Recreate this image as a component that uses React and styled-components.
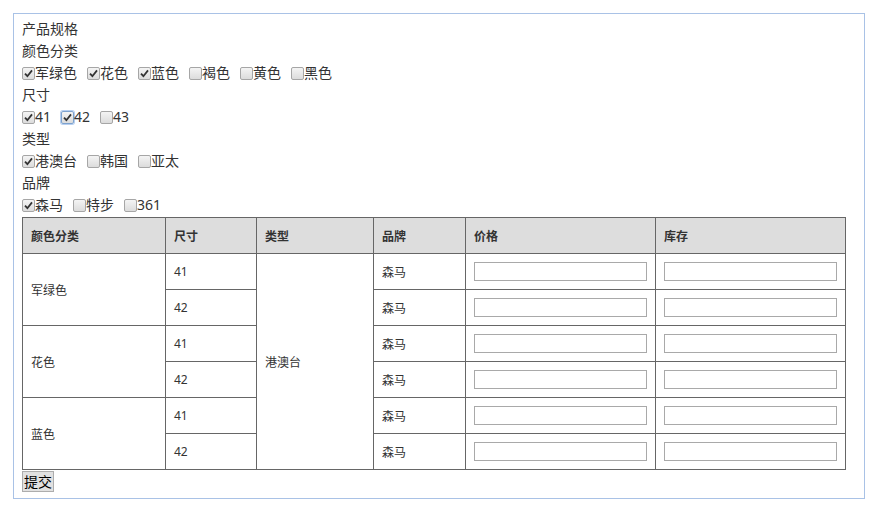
import React from "react";
import styled, { createGlobalStyle } from "styled-components";

const Global = createGlobalStyle`
  html, body { margin: 0; padding: 0; background: #fff; }
  body {
    font-family: "Noto Sans", "Noto Sans CJK SC", sans-serif;
    color: #333;
    font-size: 14px;
  }
`;

const Page = styled.div`
  padding: 13px 0 0 13px;
`;

const Panel = styled.form`
  width: 834px;
  border: 1px solid #a9c2e6;
  padding: 5px 8px 5px 8px;
`;

const Line = styled.div`
  height: 22px;
  line-height: 19px;
  font-size: 14px;
  color: #333;
  white-space: nowrap;
`;

const OptionRow = styled.div`
  height: 22px;
  display: flex;
  align-items: flex-start;
  gap: 10px;
  font-size: 14px;
  color: #333;
`;

const Option = styled.label`
  display: flex;
  align-items: center;
  cursor: pointer;
  height: 20px;
  line-height: 20px;
`;

const Box = styled.span`
  width: 11px;
  height: 11px;
  border: 1px solid ${(p) => (p.$focus ? "#7da2ce" : "#a6a6a6")};
  border-radius: 2px;
  background: linear-gradient(#f4f4f4, #dcdcdc);
  box-shadow: ${(p) => (p.$focus ? "0 0 0 1px #b7cff0" : "none")};
  display: flex;
  align-items: center;
  justify-content: center;
`;

const Table = styled.table`
  width: 824px;
  border-collapse: collapse;
  font-size: 12px;
  color: #333;
`;

const Th = styled.th`
  height: 36px;
  background: #dddddd;
  border: 1px solid #666;
  text-align: left;
  font-weight: bold;
  padding: 0 8px;
  width: ${(p) => p.$w}px;
  box-sizing: border-box;
`;

const Td = styled.td`
  height: 36px;
  box-sizing: border-box;
  border: 1px solid #666;
  padding: 0 8px;
  vertical-align: middle;
`;

const Input = styled.input`
  display: block;
  width: 173px;
  height: 19px;
  box-sizing: border-box;
  border: 1px solid #a9a9a9;
  padding: 0 2px;
  font-size: 12px;
  margin: 0;
  outline: none;
`;

const SubmitLine = styled.div`
  height: 22px;
  display: flex;
  align-items: flex-start;
  padding-top: 1px;
`;

const Submit = styled.button`
  height: 21px;
  padding: 0 1px;
  font-family: "Noto Sans CJK SC", sans-serif;
  font-size: 14px;
  line-height: 19px;
  color: #000;
  background: #e1e1e1;
  border: 1px solid #adadad;
  border-radius: 0;
  cursor: pointer;
`;

const Check = () => (
  <svg width="9" height="9" viewBox="0 0 9 9">
    <path d="M1 4.6 L3.4 7.2 L8 1.4" fill="none" stroke="#333" strokeWidth="1.8" />
  </svg>
);

const CheckItem = ({ label, checked, focus }) => (
  <Option>
    <Box $focus={focus}>{checked && <Check />}</Box>
    <span>{label}</span>
  </Option>
);

const groups = [
  {
    title: "颜色分类",
    items: [
      ["军绿色", true],
      ["花色", true],
      ["蓝色", true],
      ["褐色", false],
      ["黄色", false],
      ["黑色", false],
    ],
  },
  { title: "尺寸", items: [["41", true], ["42", true, true], ["43", false]] },
  { title: "类型", items: [["港澳台", true], ["韩国", false], ["亚太", false]] },
  { title: "品牌", items: [["森马", true], ["特步", false], ["361", false]] },
];

const colors = ["军绿色", "花色", "蓝色"];
const sizes = ["41", "42"];

export default function App() {
  return (
    <Page>
      <Global />
      <Panel onSubmit={(e) => e.preventDefault()}>
        <Line>产品规格</Line>
        {groups.map((g) => (
          <React.Fragment key={g.title}>
            <Line>{g.title}</Line>
            <OptionRow>
              {g.items.map(([l, c, f]) => (
                <CheckItem key={l} label={l} checked={c} focus={f} />
              ))}
            </OptionRow>
          </React.Fragment>
        ))}
        <Table>
          <thead>
            <tr>
              <Th $w={143}>颜色分类</Th>
              <Th $w={91}>尺寸</Th>
              <Th $w={117}>类型</Th>
              <Th $w={92}>品牌</Th>
              <Th $w={190}>价格</Th>
              <Th $w={190}>库存</Th>
            </tr>
          </thead>
          <tbody>
            {colors.map((c, ci) =>
              sizes.map((s, si) => (
                <tr key={c + s}>
                  {si === 0 && <Td rowSpan={2}>{c}</Td>}
                  <Td>{s}</Td>
                  {ci === 0 && si === 0 && <Td rowSpan={6}>港澳台</Td>}
                  <Td>森马</Td>
                  <Td>
                    <Input type="text" />
                  </Td>
                  <Td>
                    <Input type="text" />
                  </Td>
                </tr>
              ))
            )}
          </tbody>
        </Table>
        <SubmitLine>
          <Submit type="submit">提交</Submit>
        </SubmitLine>
      </Panel>
    </Page>
  );
}
